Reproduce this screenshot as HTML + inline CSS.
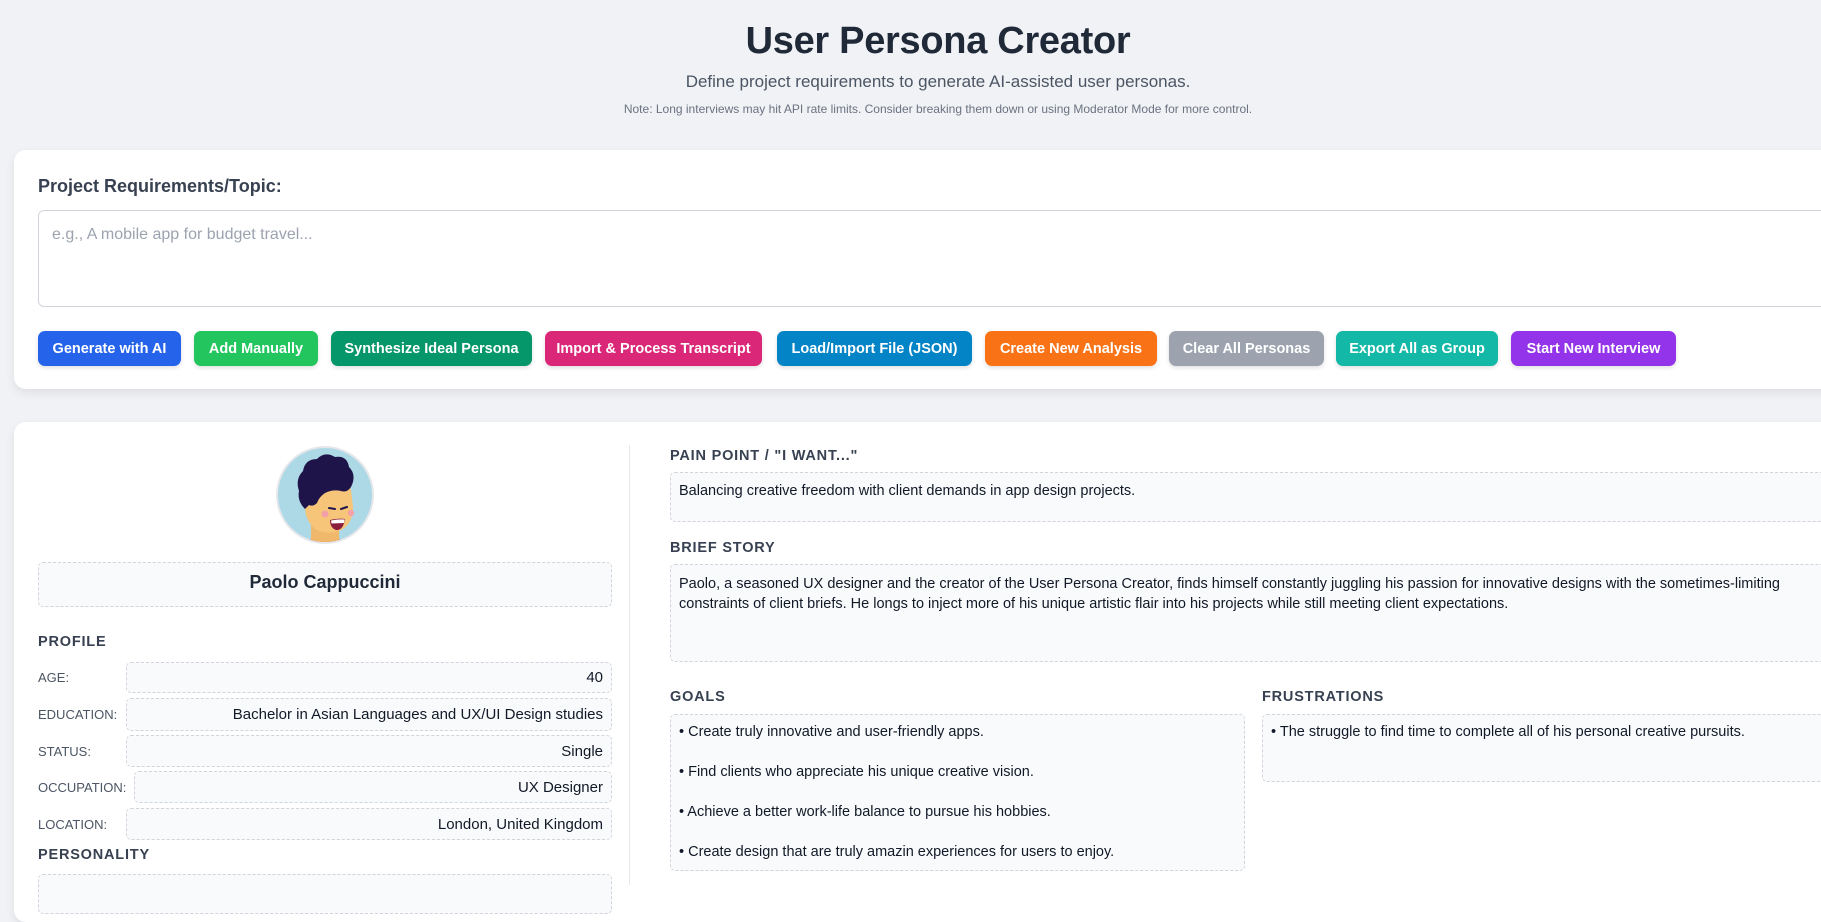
<!DOCTYPE html>
<html><head><meta charset="utf-8"><style>
*{box-sizing:border-box;margin:0;padding:0}
html,body{width:1821px;height:882px;overflow:hidden;background:#f0f2f5;font-family:"Liberation Sans",Arial,sans-serif;color:#1f2937}
.abs{position:absolute}
h1{position:absolute;left:0;width:1876px;top:20px;text-align:center;font-size:38px;font-weight:700;color:#1f2937;letter-spacing:-0.3px}
.sub{position:absolute;left:0;width:1876px;top:72px;text-align:center;font-size:17px;color:#4b5563}
.note{position:absolute;left:0;width:1876px;top:102px;text-align:center;font-size:12px;color:#6b7280}
.card{position:absolute;left:14px;width:1900px;background:#fff;border-radius:12px;box-shadow:0 4px 10px rgba(0,0,0,0.08)}
.lbl{position:absolute;left:38px;top:176px;font-size:18px;font-weight:700;color:#374151}
.ta{position:absolute;left:38px;top:210px;width:1900px;height:97px;border:1px solid #d1d5db;border-radius:6px;background:#fff}
.ta span{position:absolute;left:13px;top:15px;font-size:16px;color:#9ca3af}
.btn{position:absolute;top:331px;height:35px;border-radius:7px;color:#fff;font-size:14.5px;font-weight:700;display:flex;align-items:center;justify-content:center;box-shadow:0 2px 4px rgba(0,0,0,0.12);white-space:nowrap}
.box{position:absolute;background:#f9fafb;border:1px dashed #d1d5db;border-radius:5px}
.sec{position:absolute;font-size:14.5px;font-weight:700;color:#374151;letter-spacing:0.8px}
.rl{position:absolute;left:38px;font-size:13px;color:#4b5563}
.rv{position:absolute;font-size:15px;color:#111827;text-align:right;padding-right:8px;display:flex;align-items:center;justify-content:flex-end}
.t{position:absolute;font-size:14.5px;color:#111827;white-space:nowrap}
</style></head><body>
<h1>User Persona Creator</h1>
<div class="sub">Define project requirements to generate AI-assisted user personas.</div>
<div class="note">Note: Long interviews may hit API rate limits. Consider breaking them down or using Moderator Mode for more control.</div>

<div class="card" style="top:150px;height:239px"></div>
<div class="lbl">Project Requirements/Topic:</div>
<div class="ta"><span>e.g., A mobile app for budget travel...</span></div>
<div class="btn" style="left:38px;width:143px;background:#2563eb">Generate with AI</div>
<div class="btn" style="left:194px;width:124px;background:#22c55e">Add Manually</div>
<div class="btn" style="left:331px;width:201px;background:#059669">Synthesize Ideal Persona</div>
<div class="btn" style="left:545px;width:217px;background:#db2777">Import &amp; Process Transcript</div>
<div class="btn" style="left:777px;width:195px;background:#0284c7">Load/Import File (JSON)</div>
<div class="btn" style="left:985px;width:172px;background:#f97316">Create New Analysis</div>
<div class="btn" style="left:1169px;width:155px;background:#9ca3af">Clear All Personas</div>
<div class="btn" style="left:1336px;width:162px;background:#14b8a6">Export All as Group</div>
<div class="btn" style="left:1511px;width:165px;background:#9333ea">Start New Interview</div>

<div class="card" style="top:422px;height:500px"></div>
<div class="abs" style="left:629px;top:445px;width:1px;height:440px;background:#e5e7eb"></div>

<svg class="abs" style="left:275px;top:445px" width="100" height="100" viewBox="0 0 100 100">
<defs><clipPath id="c"><circle cx="50" cy="50" r="47"/></clipPath></defs>
<circle cx="50" cy="50" r="49" fill="#e5e7eb"/>
<circle cx="50" cy="50" r="47" fill="#add8e6"/>
<g clip-path="url(#c)">
<path d="M28 105 Q30 92 50 90 Q70 92 74 105 Z" fill="#e0592a"/>
<path d="M36 70 L36 95 Q50 100 64 95 L64 78 Z" fill="#f0b86a"/>
<path d="M30 45 Q32 32 50 30 Q72 30 76 45 L78 62 Q78 80 64 86 Q50 90 40 84 Q30 75 30 62 Z" fill="#f7c57a"/>
<path d="M30 64 Q22 56 24 46 Q20 34 28 26 Q30 14 42 14 Q50 6 60 12 Q72 10 74 22 Q82 30 76 42 Q72 48 66 46 Q58 44 50 48 Q44 52 42 58 Q38 62 34 60 Z" fill="#1f1449"/>
<path d="M54 63 L60 64 M66 64 L72 62" stroke="#1f1449" stroke-width="2" stroke-linecap="round"/>
<circle cx="50" cy="69" r="3.5" fill="#f4a0a8"/>
<circle cx="76" cy="68" r="3.2" fill="#f4a0a8"/>
<path d="M55 75 Q63 73 70 74 Q68 86 61 85 Q55 83 55 75 Z" fill="#8a1f3d"/>
<path d="M56 75.5 Q63 74 69.5 74.5 L69 78 L56.5 78.5 Z" fill="#fff"/>
</g>
</svg>

<div class="box" style="left:38px;top:562px;width:574px;height:45px"></div>
<div class="t" style="left:38px;width:574px;top:572px;text-align:center;font-size:18px;font-weight:700;color:#1f2937">Paolo Cappuccini</div>

<div class="sec" style="left:38px;top:634px">PROFILE</div>
<div class="rl" style="top:670px">AGE:</div>
<div class="box rv" style="left:126px;top:662px;width:486px;height:31px">40</div>
<div class="rl" style="top:707px">EDUCATION:</div>
<div class="box rv" style="left:126px;top:698px;width:486px;height:33px">Bachelor in Asian Languages and UX/UI Design studies</div>
<div class="rl" style="top:744px">STATUS:</div>
<div class="box rv" style="left:126px;top:735px;width:486px;height:32px">Single</div>
<div class="rl" style="top:780px">OCCUPATION:</div>
<div class="box rv" style="left:134px;top:771px;width:478px;height:32px">UX Designer</div>
<div class="rl" style="top:817px">LOCATION:</div>
<div class="box rv" style="left:126px;top:808px;width:486px;height:32px">London, United Kingdom</div>
<div class="sec" style="left:38px;top:847px">PERSONALITY</div>
<div class="box" style="left:38px;top:874px;width:574px;height:40px"></div>

<div class="sec" style="left:670px;top:448px">PAIN POINT / "I WANT..."</div>
<div class="box" style="left:670px;top:472px;width:1200px;height:50px"></div>
<div class="t" style="left:679px;top:483px">Balancing creative freedom with client demands in app design projects.</div>
<div class="sec" style="left:670px;top:540px">BRIEF STORY</div>
<div class="box" style="left:670px;top:564px;width:1200px;height:98px"></div>
<div class="t" style="left:679px;top:574px;line-height:20px">Paolo, a seasoned UX designer and the creator of the User Persona Creator, finds himself constantly juggling his passion for innovative designs with the sometimes-limiting<br>constraints of client briefs. He longs to inject more of his unique artistic flair into his projects while still meeting client expectations.</div>

<div class="sec" style="left:670px;top:689px">GOALS</div>
<div class="box" style="left:670px;top:714px;width:575px;height:157px"></div>
<div class="t" style="left:679px;top:724px">• Create truly innovative and user-friendly apps.</div>
<div class="t" style="left:679px;top:764px">• Find clients who appreciate his unique creative vision.</div>
<div class="t" style="left:679px;top:804px">• Achieve a better work-life balance to pursue his hobbies.</div>
<div class="t" style="left:679px;top:844px">• Create design that are truly amazin experiences for users to enjoy.</div>

<div class="sec" style="left:1262px;top:689px">FRUSTRATIONS</div>
<div class="box" style="left:1262px;top:714px;width:600px;height:68px"></div>
<div class="t" style="left:1271px;top:724px">• The struggle to find time to complete all of his personal creative pursuits.</div>
</body></html>
